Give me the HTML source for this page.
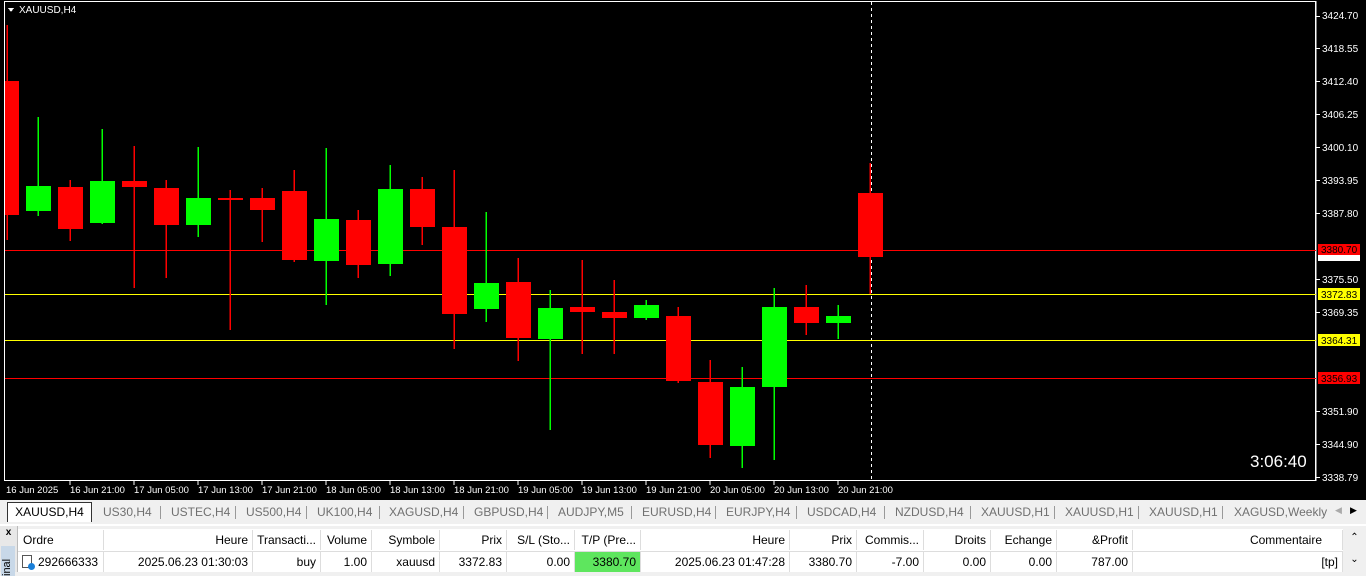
<!DOCTYPE html><html><head><meta charset="utf-8"><style>
body{margin:0;width:1366px;height:572px;overflow:hidden;background:#f0f0f0;font-family:"Liberation Sans",sans-serif;font-size:12px;position:relative}
.a{position:absolute}
.tab{position:absolute;top:503px;height:18px;line-height:18px;color:#707070;font-size:12px}
.sep{position:absolute;top:506px;width:1px;height:13px;background:#999}
.c{position:absolute;height:20px;line-height:20px;text-align:right;padding-right:4px;box-sizing:border-box;border-right:1px solid #ddd;white-space:nowrap;overflow:hidden}
</style></head><body>
<svg class="a" style="left:0;top:0" width="1366" height="500" font-family="Liberation Sans, sans-serif" shape-rendering="crispEdges">
<rect x="0" y="0" width="1366" height="500" fill="#000"/>
<rect x="4.5" y="1.5" width="1311" height="479" fill="none" stroke="#fff"/>
<line x1="1316" y1="1" x2="1316" y2="481" stroke="#fff"/>
<g font-size="10" fill="#fff">
<polygon points="8,8 14,8 11,12" fill="#fff"/><text x="19" y="13">XAUUSD,H4</text>
</g>
<g stroke="#fff">
<line x1="1316" y1="16.5" x2="1320" y2="16.5"/><line x1="1316" y1="48.5" x2="1320" y2="48.5"/><line x1="1316" y1="81.5" x2="1320" y2="81.5"/><line x1="1316" y1="114.5" x2="1320" y2="114.5"/><line x1="1316" y1="147.5" x2="1320" y2="147.5"/><line x1="1316" y1="180.5" x2="1320" y2="180.5"/><line x1="1316" y1="213.5" x2="1320" y2="213.5"/><line x1="1316" y1="279.5" x2="1320" y2="279.5"/><line x1="1316" y1="312.5" x2="1320" y2="312.5"/><line x1="1316" y1="411.5" x2="1320" y2="411.5"/><line x1="1316" y1="444.5" x2="1320" y2="444.5"/><line x1="1316" y1="477.5" x2="1320" y2="477.5"/>
</g>
<g font-size="10" fill="#fff">
<text x="1322" y="19">3424.70</text><text x="1322" y="52">3418.55</text><text x="1322" y="85">3412.40</text><text x="1322" y="118">3406.25</text><text x="1322" y="151">3400.10</text><text x="1322" y="184">3393.95</text><text x="1322" y="217">3387.80</text><text x="1322" y="283">3375.50</text><text x="1322" y="316">3369.35</text><text x="1322" y="415">3351.90</text><text x="1322" y="448">3344.90</text><text x="1322" y="481">3338.79</text>
</g>
<line x1="871.5" y1="2" x2="871.5" y2="480" stroke="#fff" stroke-dasharray="3,3"/>
<rect x="5" y="250" width="1311" height="1" fill="#f00"/>
<rect x="5" y="378" width="1311" height="1" fill="#f00"/>
<rect x="5" y="294" width="1311" height="1" fill="#ff0"/>
<rect x="5" y="340" width="1311" height="1" fill="#ff0"/>
<rect x="1318" y="251" width="42" height="10" fill="#fff"/>
<rect x="1318" y="244" width="42" height="11" fill="#f00"/><text x="1321" y="253" font-size="10" fill="#000">3380.70</text>
<rect x="1318" y="288" width="42" height="12" fill="#ff0"/><text x="1321" y="298" font-size="10" fill="#000">3372.83</text>
<rect x="1318" y="334" width="42" height="12" fill="#ff0"/><text x="1321" y="344" font-size="10" fill="#000">3364.31</text>
<rect x="1318" y="372" width="42" height="12" fill="#f00"/><text x="1321" y="382" font-size="10" fill="#000">3356.93</text>
<g stroke-width="1.5">
<line x1="7" y1="25" x2="7" y2="240" stroke="#f00"/>
<line x1="38" y1="117" x2="38" y2="216" stroke="#0f0"/>
<line x1="70" y1="180" x2="70" y2="241" stroke="#f00"/>
<line x1="102" y1="129" x2="102" y2="224" stroke="#0f0"/>
<line x1="134" y1="146" x2="134" y2="288" stroke="#f00"/>
<line x1="166" y1="180" x2="166" y2="278" stroke="#f00"/>
<line x1="198" y1="147" x2="198" y2="237" stroke="#0f0"/>
<line x1="230" y1="190" x2="230" y2="330" stroke="#f00"/>
<line x1="262" y1="188" x2="262" y2="242" stroke="#f00"/>
<line x1="294" y1="170" x2="294" y2="262" stroke="#f00"/>
<line x1="326" y1="148" x2="326" y2="305" stroke="#0f0"/>
<line x1="358" y1="210" x2="358" y2="278" stroke="#f00"/>
<line x1="390" y1="165" x2="390" y2="276" stroke="#0f0"/>
<line x1="422" y1="177" x2="422" y2="245" stroke="#f00"/>
<line x1="454" y1="170" x2="454" y2="349" stroke="#f00"/>
<line x1="486" y1="212" x2="486" y2="322" stroke="#0f0"/>
<line x1="518" y1="258" x2="518" y2="361" stroke="#f00"/>
<line x1="550" y1="290" x2="550" y2="430" stroke="#0f0"/>
<line x1="582" y1="260" x2="582" y2="354" stroke="#f00"/>
<line x1="614" y1="280" x2="614" y2="354" stroke="#f00"/>
<line x1="646" y1="300" x2="646" y2="320" stroke="#0f0"/>
<line x1="678" y1="307" x2="678" y2="383" stroke="#f00"/>
<line x1="710" y1="360" x2="710" y2="458" stroke="#f00"/>
<line x1="742" y1="367" x2="742" y2="468" stroke="#0f0"/>
<line x1="774" y1="288" x2="774" y2="460" stroke="#0f0"/>
<line x1="806" y1="285" x2="806" y2="335" stroke="#f00"/>
<line x1="838" y1="305" x2="838" y2="339" stroke="#0f0"/>
<line x1="870" y1="163" x2="870" y2="294" stroke="#f00"/>
</g>
<g>
<rect x="5" y="81" width="14" height="134" fill="#f00"/>
<rect x="26" y="186" width="25" height="25" fill="#0f0"/>
<rect x="58" y="187" width="25" height="42" fill="#f00"/>
<rect x="90" y="181" width="25" height="42" fill="#0f0"/>
<rect x="122" y="181" width="25" height="6" fill="#f00"/>
<rect x="154" y="188" width="25" height="37" fill="#f00"/>
<rect x="186" y="198" width="25" height="27" fill="#0f0"/>
<rect x="218" y="198" width="25" height="2" fill="#f00"/>
<rect x="250" y="198" width="25" height="12" fill="#f00"/>
<rect x="282" y="191" width="25" height="69" fill="#f00"/>
<rect x="314" y="219" width="25" height="42" fill="#0f0"/>
<rect x="346" y="220" width="25" height="45" fill="#f00"/>
<rect x="378" y="189" width="25" height="75" fill="#0f0"/>
<rect x="410" y="189" width="25" height="38" fill="#f00"/>
<rect x="442" y="227" width="25" height="87" fill="#f00"/>
<rect x="474" y="283" width="25" height="26" fill="#0f0"/>
<rect x="506" y="282" width="25" height="56" fill="#f00"/>
<rect x="538" y="308" width="25" height="31" fill="#0f0"/>
<rect x="570" y="307" width="25" height="5" fill="#f00"/>
<rect x="602" y="312" width="25" height="6" fill="#f00"/>
<rect x="634" y="305" width="25" height="13" fill="#0f0"/>
<rect x="666" y="316" width="25" height="65" fill="#f00"/>
<rect x="698" y="382" width="25" height="63" fill="#f00"/>
<rect x="730" y="387" width="25" height="59" fill="#0f0"/>
<rect x="762" y="307" width="25" height="80" fill="#0f0"/>
<rect x="794" y="307" width="25" height="16" fill="#f00"/>
<rect x="826" y="316" width="25" height="7" fill="#0f0"/>
<rect x="858" y="193" width="25" height="64" fill="#f00"/>
</g>
<text x="1250" y="467" font-size="17" fill="#fff">3:06:40</text>
<g font-size="9.5" fill="#fff">
<text x="6" y="493">16 Jun 2025</text><text x="70" y="493">16 Jun 21:00</text><text x="134" y="493">17 Jun 05:00</text><text x="198" y="493">17 Jun 13:00</text><text x="262" y="493">17 Jun 21:00</text><text x="326" y="493">18 Jun 05:00</text><text x="390" y="493">18 Jun 13:00</text><text x="454" y="493">18 Jun 21:00</text><text x="518" y="493">19 Jun 05:00</text><text x="582" y="493">19 Jun 13:00</text><text x="646" y="493">19 Jun 21:00</text><text x="710" y="493">20 Jun 05:00</text><text x="774" y="493">20 Jun 13:00</text><text x="838" y="493">20 Jun 21:00</text>
</g>
<g stroke="#fff"><line x1="70" y1="481" x2="70" y2="485"/><line x1="134" y1="481" x2="134" y2="485"/><line x1="198" y1="481" x2="198" y2="485"/><line x1="262" y1="481" x2="262" y2="485"/><line x1="326" y1="481" x2="326" y2="485"/><line x1="390" y1="481" x2="390" y2="485"/><line x1="454" y1="481" x2="454" y2="485"/><line x1="518" y1="481" x2="518" y2="485"/><line x1="582" y1="481" x2="582" y2="485"/><line x1="646" y1="481" x2="646" y2="485"/><line x1="710" y1="481" x2="710" y2="485"/><line x1="774" y1="481" x2="774" y2="485"/><line x1="838" y1="481" x2="838" y2="485"/></g>
</svg>
<div class="a" style="left:0;top:500px;width:1366px;height:24px;background:#f0f0f0"></div>
<div class="a" style="left:7px;top:502px;width:83px;height:19px;background:#fff;border:1px solid #333;border-bottom:none;line-height:19px;text-align:center;font-size:12px">XAUUSD,H4</div>
<div class="tab" style="left:103px">US30,H4</div><div class="sep" style="left:160px"></div>
<div class="tab" style="left:171px">USTEC,H4</div><div class="sep" style="left:235px"></div>
<div class="tab" style="left:246px">US500,H4</div><div class="sep" style="left:306px"></div>
<div class="tab" style="left:317px">UK100,H4</div><div class="sep" style="left:379px"></div>
<div class="tab" style="left:389px">XAGUSD,H4</div><div class="sep" style="left:463px"></div>
<div class="tab" style="left:474px">GBPUSD,H4</div><div class="sep" style="left:547px"></div>
<div class="tab" style="left:558px">AUDJPY,M5</div><div class="sep" style="left:631px"></div>
<div class="tab" style="left:642px">EURUSD,H4</div><div class="sep" style="left:715px"></div>
<div class="tab" style="left:726px">EURJPY,H4</div><div class="sep" style="left:796px"></div>
<div class="tab" style="left:807px">USDCAD,H4</div><div class="sep" style="left:884px"></div>
<div class="tab" style="left:895px">NZDUSD,H4</div><div class="sep" style="left:970px"></div>
<div class="tab" style="left:981px">XAUUSD,H1</div><div class="sep" style="left:1054px"></div>
<div class="tab" style="left:1065px">XAUUSD,H1</div><div class="sep" style="left:1138px"></div>
<div class="tab" style="left:1149px">XAUUSD,H1</div><div class="sep" style="left:1222px"></div>
<div class="tab" style="left:1234px">XAGUSD,Weekly</div>
<div class="a" style="left:1335px;top:505px;font-size:9px;color:#aaa">◀</div><div class="a" style="left:1350px;top:505px;font-size:9px">▶</div>
<div class="a" style="left:0;top:524px;width:1366px;height:2px;background:#fff"></div>
<div class="a" style="left:0;top:526px;width:17px;height:46px;background:#e8e8e8;border-right:1px solid #bbb"><div style="font-size:10px;font-weight:bold;text-align:center;line-height:14px">x</div><div style="position:absolute;left:1px;top:20px;width:14px;height:30px;background:#c8d8e8;font-size:11px;writing-mode:vertical-rl;transform:rotate(180deg)">inal</div></div>
<div class="a" style="left:18px;top:529px;width:1325px;height:22px;background:#fff;border-bottom:1px solid #ddd"></div>
<div class="a" style="left:18px;top:552px;width:1325px;height:20px;background:#fff"></div>
<div class="c" style="left:18px;top:530px;width:86px;text-align:left;padding-left:5px">Ordre</div>
<div class="c" style="left:104px;top:530px;width:149px">Heure</div>
<div class="c" style="left:253px;top:530px;width:68px">Transacti...</div>
<div class="c" style="left:321px;top:530px;width:51px">Volume</div>
<div class="c" style="left:372px;top:530px;width:68px">Symbole</div>
<div class="c" style="left:440px;top:530px;width:67px">Prix</div>
<div class="c" style="left:507px;top:530px;width:68px">S/L (Sto...</div>
<div class="c" style="left:575px;top:530px;width:66px">T/P (Pre...</div>
<div class="c" style="left:641px;top:530px;width:149px">Heure</div>
<div class="c" style="left:790px;top:530px;width:67px">Prix</div>
<div class="c" style="left:857px;top:530px;width:67px">Commis...</div>
<div class="c" style="left:924px;top:530px;width:67px">Droits</div>
<div class="c" style="left:991px;top:530px;width:66px">Echange</div>
<div class="c" style="left:1057px;top:530px;width:76px">&amp;Profit</div>
<div class="c" style="left:1133px;top:530px;width:210px;padding-right:20px">Commentaire</div>
<div class="c" style="left:18px;top:552px;width:86px;text-align:left;padding-left:20px">292666333</div>
<div class="a" style="left:22px;top:555px;width:10px;height:13px;border:1px solid #555;background:#fff;box-sizing:border-box"></div><div class="a" style="left:28px;top:563px;width:7px;height:7px;border-radius:50%;background:#1a7fd8"></div>
<div class="c" style="left:104px;top:552px;width:149px">2025.06.23 01:30:03</div>
<div class="c" style="left:253px;top:552px;width:68px">buy</div>
<div class="c" style="left:321px;top:552px;width:51px">1.00</div>
<div class="c" style="left:372px;top:552px;width:68px">xauusd</div>
<div class="c" style="left:440px;top:552px;width:67px">3372.83</div>
<div class="c" style="left:507px;top:552px;width:68px">0.00</div>
<div class="c" style="left:575px;top:552px;width:66px;background:#5ee65e">3380.70</div>
<div class="c" style="left:641px;top:552px;width:149px">2025.06.23 01:47:28</div>
<div class="c" style="left:790px;top:552px;width:67px">3380.70</div>
<div class="c" style="left:857px;top:552px;width:67px">-7.00</div>
<div class="c" style="left:924px;top:552px;width:67px">0.00</div>
<div class="c" style="left:991px;top:552px;width:66px">0.00</div>
<div class="c" style="left:1057px;top:552px;width:76px">787.00</div>
<div class="c" style="left:1133px;top:552px;width:210px">[tp]</div>
<div class="a" style="left:1343px;top:527px;width:23px;height:45px;background:#f0f0f0;font-size:10px;text-align:center;line-height:22px">⌃<br>⌄</div>
</body></html>
